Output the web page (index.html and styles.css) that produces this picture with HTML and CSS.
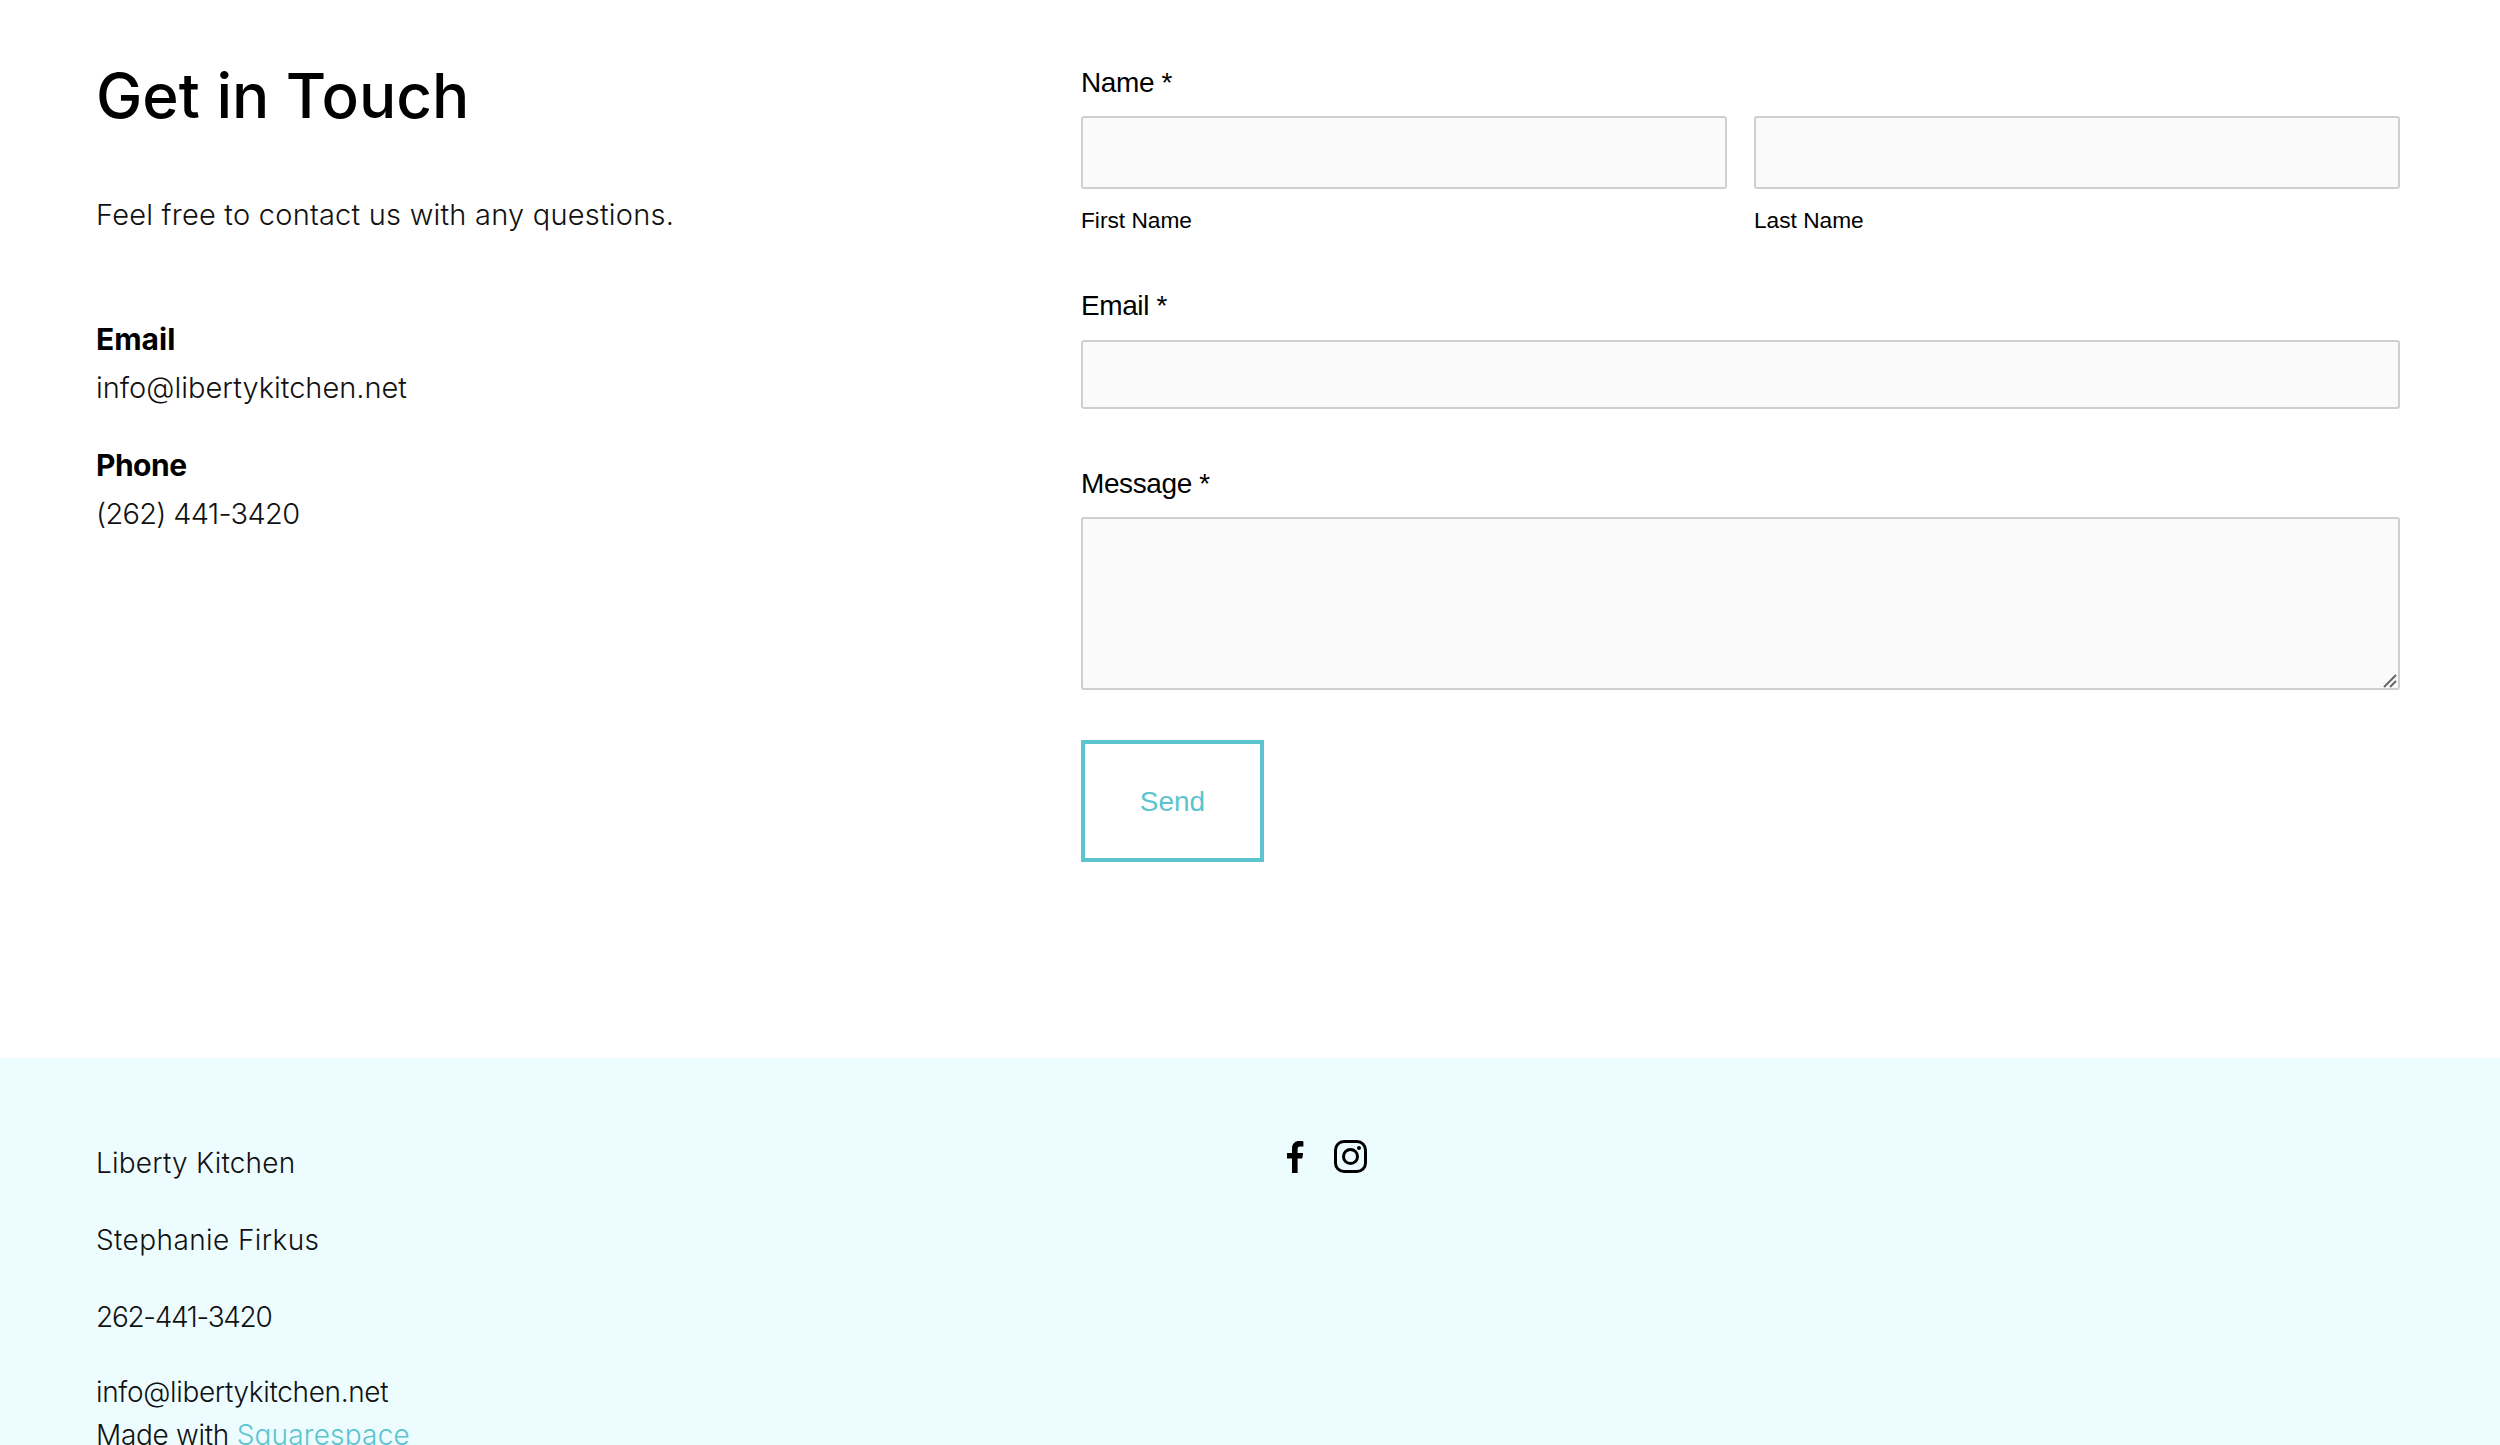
FILE: index.html
```html
<!DOCTYPE html>
<html lang="en">
<head>
<meta charset="utf-8">
<title>Contact - Liberty Kitchen</title>
<link rel="stylesheet" href="styles.css">
</head>
<body>
<div class="page">
  <main class="contact">
    <section class="intro">
      <h1 class="title">Get in Touch</h1>
      <p class="lead">Feel free to contact us with any questions.</p>
      <h2 class="info-label info-label-first">Email</h2>
      <p class="info-value">info@libertykitchen.net</p>
      <h2 class="info-label info-label-phone">Phone</h2>
      <p class="info-value info-phone">(262) 441-3420</p>
    </section>
    <form class="form">
      <div class="field-label">Name *</div>
      <div class="name-row">
        <div>
          <input class="input input-name" type="text" aria-label="First Name">
          <div class="sub-label">First Name</div>
        </div>
        <div>
          <input class="input input-name" type="text" aria-label="Last Name">
          <div class="sub-label">Last Name</div>
        </div>
      </div>
      <div class="field-label field-email">Email *</div>
      <input class="input input-email" type="email" aria-label="Email">
      <div class="field-label field-message">Message *</div>
      <div class="message-wrap">
        <textarea class="input input-message" aria-label="Message"></textarea>
        <svg class="grip" viewBox="0 0 14 14" aria-hidden="true"><path d="M1 13 13 1M7 13l6-6"/></svg>
      </div>
      <button class="send" type="button">Send</button>
    </form>
  </main>
  <footer class="footer">
    <div class="footer-text">
      <p class="footer-line line-liberty">Liberty Kitchen</p>
      <p class="footer-line line-stephanie">Stephanie Firkus</p>
      <p class="footer-line line-phone">262-441-3420</p>
      <p class="footer-line line-email">info@libertykitchen.net</p>
      <p class="footer-line line-made">Made with <a class="footer-link" href="#">Squarespace</a></p>
    </div>
    <div class="social">
      <svg class="icon-f" viewBox="0 0 18 33" aria-label="Facebook"><path d="M11.600 33V18.600h4.700l.8-5.700h-5.500V9.300c0-1.600.5-2.800 2.800-2.800h3V1.300C16.900 1.200 15.200 1 13.300 1 9 1 6 3.600 6 8.500v4.400H1v5.700h5V33z"/></svg>
      <svg class="icon-ig" viewBox="0 0 33 33" aria-label="Instagram"><rect x="1.500" y="1.500" width="30" height="30" rx="8.500"/><circle cx="16.500" cy="16.500" r="7"/><circle class="ig-dot" cx="25" cy="8" r="2"/></svg>
    </div>
  </footer>
</div>
</body>
</html>
```

FILE: styles.css
```css
* { box-sizing: border-box; }
html, body { margin: 0; padding: 0; background: #fff; }
.page { height: 1445px; overflow: hidden; font-family: Inter, "Open Sans", sans-serif; color: #000; }
.contact { display: grid; grid-template-columns: 985px 1319px; padding: 0 100px 0 96px; height: 1058px; }
.title { margin: 60px 0 0; font-size: 62px; line-height: 72px; font-weight: 500; letter-spacing: 0; }
.lead { margin: 60px 0 0; font-size: 29px; line-height: 46px; font-weight: 300; letter-spacing: 0.22px; color: #111; }
.info-label { margin: 31px 0 0; font-size: 30px; line-height: 46px; font-weight: 700; }
.info-label-first { margin-top: 78px; }
.info-label-phone { letter-spacing: -0.5px; }
.info-value { margin: 3px 0 0; font-size: 29px; line-height: 46px; font-weight: 300; color: #111; }
.info-phone { letter-spacing: -0.7px; }
.form { font-family: "Liberation Sans", Arial, sans-serif; padding-top: 66px; }
.field-label { font-size: 28px; line-height: 34px; letter-spacing: -0.4px; }
.name-row { display: grid; grid-template-columns: 646px 646px; column-gap: 27px; margin-top: 16px; }
.input { display: block; width: 100%; margin: 0; padding: 0 12px; background: #fafafa; border: 2px solid #cfcfcf; border-radius: 3px; font: inherit; outline: none; }
.input-name { height: 73px; }
.sub-label { margin-top: 17px; font-size: 22.700px; line-height: 28px; }
.field-email { margin-top: 55px; }
.input-email { margin-top: 17px; height: 69px; }
.field-message { margin-top: 58px; }
.message-wrap { position: relative; margin-top: 16px; }
.input-message { height: 173px; resize: none; }
.grip { position: absolute; right: 3px; bottom: 2px; width: 14px; height: 14px; fill: none; stroke: #666; stroke-width: 2; }
.send { display: block; width: 183px; height: 122px; margin-top: 50px; padding: 2px 0 0; background: #fff; border: 4px solid #5bc4cf; border-radius: 0; color: #5bc4cf; font: inherit; font-size: 28px; cursor: pointer; }
.footer { display: grid; grid-template-columns: 1190px 1fr; height: 387px; padding: 0 0 0 96px; background: #edfdff; }
.footer-text { padding-top: 81px; }
.footer-line { margin: 0 0 29px; font-size: 28px; line-height: 48px; font-weight: 300; color: #111; }
.line-liberty { letter-spacing: 0.2px; }
.line-stephanie { letter-spacing: 0.4px; }
.line-phone { margin-bottom: 27px; letter-spacing: -1.300px; }
.line-email { margin-bottom: -5px; letter-spacing: -0.35px; }
.line-made { letter-spacing: -0.3px; }
.footer-link { color: #5bc4cf; letter-spacing: 0.2px; text-decoration: none; }
.social { display: flex; align-items: flex-start; gap: 30px; padding-top: 82px; }
.icon-f { width: 18px; height: 33px; fill: #000; }
.icon-ig { width: 33px; height: 33px; fill: none; stroke: #000; stroke-width: 3; }
.ig-dot { fill: #000; stroke: none; }
```
